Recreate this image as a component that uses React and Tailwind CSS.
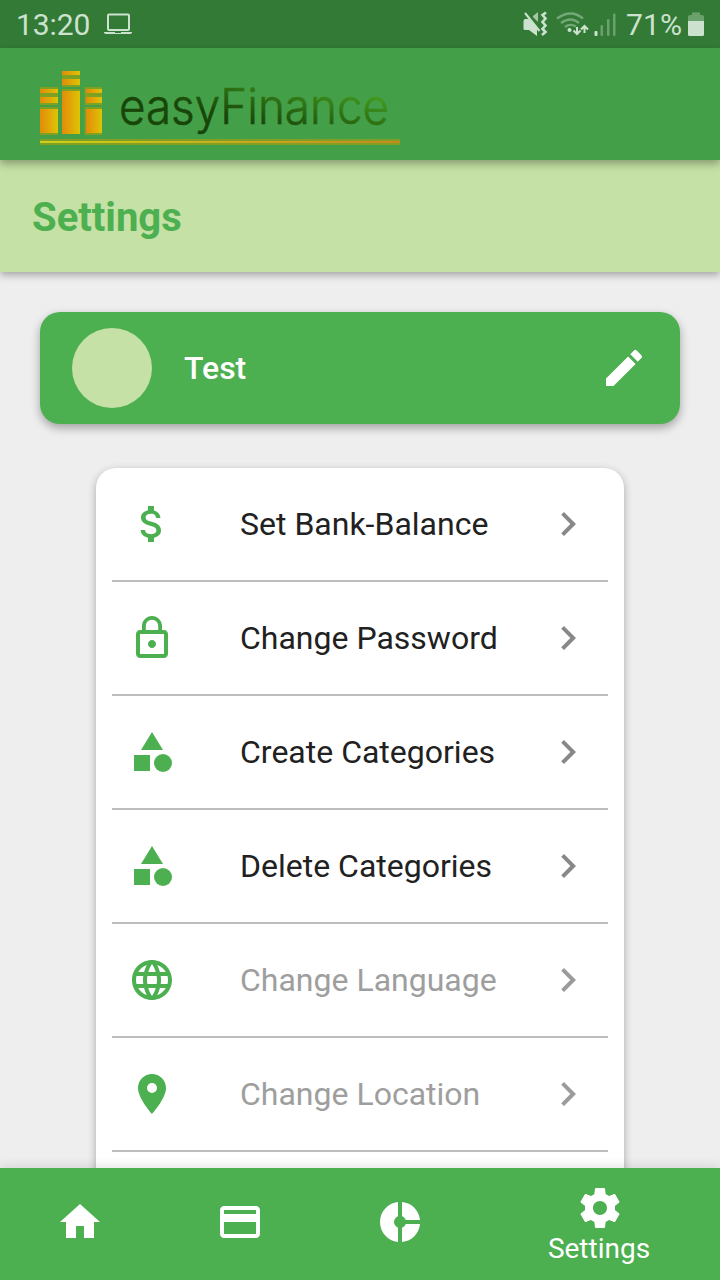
import { MdEdit, MdAttachMoney, MdLockOutline, MdCategory, MdLanguage, MdLocationOn, MdChevronRight, MdCreditCard } from "react-icons/md";

const items = [
  { label: "Set Bank-Balance", icon: MdAttachMoney },
  { label: "Change Password", icon: MdLockOutline },
  { label: "Create Categories", icon: MdCategory },
  { label: "Delete Categories", icon: MdCategory },
  { label: "Change Language", icon: MdLanguage, disabled: true },
  { label: "Change Location", icon: MdLocationOn, disabled: true },
];

function StatusBar() {
  return (
    <div className="flex h-12 shrink-0 items-center justify-between bg-[#327a36] pl-4 pr-4 text-[30px] text-[#cde2ce]">
      <div className="flex items-center">
        <span className="w-[88px] pt-px leading-none tracking-[-0.1px]">13:20</span>
        <svg width="28" height="22" viewBox="0 0 28 22" fill="none">
          <rect x="4" y="1.500" width="21" height="15.500" rx="1" stroke="currentColor" strokeWidth="2" />
          <path d="M0 19h11v1h6v-1h11v1l-1.500 1h-25L0 20z" fill="currentColor" />
        </svg>
      </div>
      <svg width="182" height="48" viewBox="522 0 182 48" fill="currentColor">
        <path d="M525 19h3.500l8.500 8.500V36l-8-6h-4q-1.500 0-1.500-1.500v-7q0-2.500 1.500-2.500z" />
        <path d="M533 16l5-4v10l-5-5z" opacity=".75" />
        <path d="M525 13l14.500 18" stroke="currentColor" strokeWidth="2" />
        <path d="M546.500 13l-3.500 2.500 3 3.500-3 3.500 3 3.500-3 3.500 3 3-3.500 3" transform="translate(-.5 -.5)" fill="none" stroke="currentColor" strokeWidth="2.600" />
        <g fill="none" stroke="#74a877" strokeWidth="2.400">
          <path d="M557 18.500q14-10 26 0M561 23q10-7 18 0M565 27q5-4 11-.5" />
        </g>
        <circle cx="569.500" cy="30" r="2" />
        <path d="M577 27v7m-3.500-3.500l3.500 3.500 3.500-3.500M584.500 33v-7m-3.500 3.500l3.500-3.500 3.500 3.500" fill="none" stroke="currentColor" strokeWidth="2" />
        <rect x="594.500" y="31" width="3" height="5" rx="1" />
        <g fill="#6aa16d">
          <rect x="600.500" y="25" width="2.500" height="11" rx="1" />
          <rect x="607" y="19" width="2.500" height="17" rx="1" />
          <rect x="613" y="13.500" width="2.500" height="22.500" rx="1" />
        </g>
        <text x="626" y="35" fontSize="30" textLength="56" lengthAdjust="spacingAndGlyphs">71%</text>
        <path d="M688 21v-4q0-2 2-2h2v-2.500h8V15h2q2 0 2 2v4z" fill="#6aa16d" />
        <path d="M688 21h16v13.500q0 1.500-1.500 1.500h-13q-1.500 0-1.500-1.500z" />
      </svg>
    </div>
  );
}

function Logo() {
  const bars = [
    [40, 89, 4], [40, 97, 6], [40, 109, 24],
    [62, 71, 4], [62, 79, 6], [62, 91, 43],
    [86, 89, 4], [86, 97, 6], [86, 109, 24],
  ];
  return (
    <svg width="720" height="112" viewBox="0 48 720 112">
      <defs>
        <linearGradient id="bar"><stop stopColor="#e38b08" /><stop offset="1" stopColor="#ddc406" /></linearGradient>
        <linearGradient id="line"><stop stopColor="#c9d31a" /><stop offset="1" stopColor="#c48a22" /></linearGradient>
        <linearGradient id="word" gradientUnits="userSpaceOnUse" x1="260" y1="124" x2="273" y2="72">
          <stop stopColor="#184508" /><stop offset="1" stopColor="#40991e" />
        </linearGradient>
      </defs>
      {bars.map(([x, y, h]) => {
        const right = x === 86;
        const w = right ? 16 : 18;
        const top = y === 71 ? y : y - 2;
        const bottom = h === 43 ? y + h : y + h + 2;
        return (
          <g key={x + "-" + y}>
            <rect x={right ? 84.5 : x} y={top} width={right ? 17.5 : w} height={bottom - top} fill="#7ea023" />
            <rect x={x} y={y} width={w} height={h} fill="url(#bar)" />
          </g>
        );
      })}
      <rect x="40" y="139" width="360" height="6" fill="#829f24" />
      <rect x="40" y="141" width="360" height="2" fill="url(#line)" />
      <text x="119" y="124" fontFamily="Inter, sans-serif" fontWeight="300" fontSize="49" textLength="270" lengthAdjust="spacingAndGlyphs" fill="url(#word)" stroke="url(#word)" strokeWidth=".6">easyFinance</text>
    </svg>
  );
}

function NavIcon({ d }) {
  return <svg width="48" height="48" viewBox="0 0 24 24" fill="currentColor"><path d={d} /></svg>;
}

export default function App() {
  return (
    <div className="flex h-[1280px] w-[720px] flex-col overflow-hidden bg-[#eeeeee] font-[Roboto,sans-serif]">
      <StatusBar />
      <header className="relative z-20 h-28 shrink-0 bg-[#44a048] shadow-[0_4px_8px_rgba(0,0,0,0.3)]">
        <Logo />
      </header>
      <div className="relative z-10 flex h-28 shrink-0 items-center bg-[#c5e1a5] px-8 pt-1 shadow-[0_3px_8px_rgba(0,0,0,0.32)]">
        <h1 className="text-[40px] font-bold leading-none text-[#4caf50]">Settings</h1>
      </div>
      <main className="flex min-h-0 flex-1 flex-col overflow-hidden px-10 pt-10">
        <section className="flex h-28 shrink-0 items-center rounded-[20px] bg-[#4caf50] pl-8 pr-8 text-white shadow-[0_4px_10px_rgba(0,0,0,0.32)]">
          <div className="size-20 rounded-full bg-[#c5e1a5]" />
          <span className="ml-8 flex-1 text-[32px] font-medium leading-none">Test</span>
          <MdEdit size={48} />
        </section>
        <section className="mx-14 mt-11 h-[800px] shrink-0 rounded-[20px] bg-white px-4 shadow-[0_3px_8px_rgba(0,0,0,0.3)]">
          {items.map(({ label, icon: Icon, disabled }) => (
            <div key={label} className="flex h-[114px] items-center border-b-2 border-[#bdbdbd] px-4">
              <Icon size={48} className="text-[#4caf50]" />
              <span className={disabled ? "ml-16 flex-1 text-[32px] leading-none text-[#9e9e9e]" : "ml-16 flex-1 text-[32px] leading-none text-[#212121]"}>{label}</span>
              <MdChevronRight size={48} className={disabled ? "mb-px text-[#9b9b9b]" : "mb-px text-[#888888]"} />
            </div>
          ))}
        </section>
      </main>
      <nav className="relative z-10 flex h-28 shrink-0 bg-[#4caf50] text-white shadow-[0_0_12px_rgba(0,0,0,0.15)]">
        <div className="flex w-40 items-center justify-center pb-1"><NavIcon d="M10 20v-6h4v6h5v-8h3L12 3 2 12h3v8z" /></div>
        <div className="flex w-40 items-center justify-center pb-1"><MdCreditCard size={48} /></div>
        <div className="flex w-40 items-center justify-center pb-1">
          <NavIcon d="M11 9.160V2c-5 .5-9 4.790-9 10s4 9.500 9 10v-7.160c-1-.41-2-1.520-2-2.840s1-2.430 2-2.840zM14.860 11H22c-.48-4.750-4-8.530-9-9v7.160c1 .3 1.520.98 1.860 1.840zM13 14.840V22c5-.47 8.520-4.250 9-9h-7.140c-.34.86-.86 1.540-1.860 1.840z" />
        </div>
        <div className="flex flex-1 flex-col items-center pt-4">
          <NavIcon d="M19.43 12.98c.04-.32.07-.64.07-.98s-.03-.66-.07-.98l2.11-1.65c.19-.15.24-.42.12-.64l-2-3.46c-.12-.22-.39-.3-.61-.22l-2.49 1c-.52-.4-1.08-.73-1.69-.98l-.38-2.65C14.46 2.18 14.25 2 14 2h-4c-.25 0-.46.18-.49.42l-.38 2.65c-.61.25-1.17.59-1.69.98l-2.49-1c-.23-.09-.49 0-.61.22l-2 3.46c-.13.22-.07.49.12.64l2.11 1.65c-.04.32-.07.65-.07.98s.03.66.07.98l-2.11 1.65c-.19.15-.24.42-.12.64l2 3.46c.12.22.39.3.61.22l2.49-1c.52.4 1.08.73 1.69.98l.38 2.65c.03.24.24.42.49.42h4c.25 0 .46-.18.49-.42l.38-2.65c.61-.25 1.17-.59 1.69-.98l2.49 1c.23.09.49 0 .61-.22l2-3.46c.12-.22.07-.49-.12-.64l-2.11-1.65zM12 15.5c-1.93 0-3.5-1.57-3.5-3.5s1.57-3.5 3.5-3.5 3.5 1.57 3.5 3.5-1.57 3.5-3.5 3.5z" />
          <span className="mr-0.5 mt-0.5 text-[28px] leading-[30px]">Settings</span>
        </div>
      </nav>
    </div>
  );
}
